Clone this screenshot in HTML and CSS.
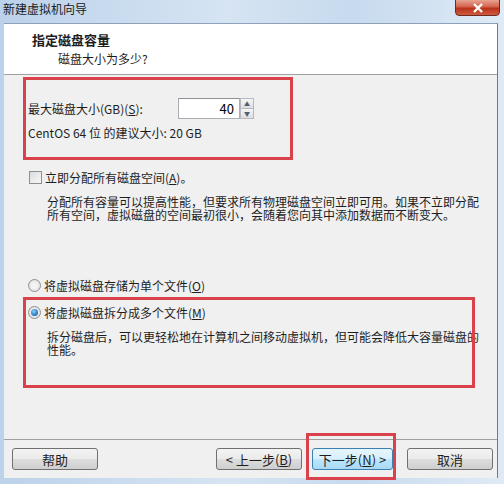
FILE: index.html
```html
<!DOCTYPE html>
<html lang="zh-CN">
<head>
  <meta charset="UTF-8">
  <title>新建虚拟机向导</title>
  <link rel="stylesheet" href="styles.css">
</head>
<body>
  <div class="window">
    <div class="titlebar">
      <span class="title">新建虚拟机向导</span>
      <button class="close-btn">
        <svg width="12" height="10" viewBox="0 0 12 10"><path d="M2 1 L10 9 M10 1 L2 9" stroke="#fff" stroke-width="2.4" fill="none"/></svg>
      </button>
    </div>
    <div class="client">
      <div class="header">
        <h1>指定磁盘容量</h1>
        <p>磁盘大小为多少?</p>
      </div>
      <div class="content">
        <div class="mark size-box">
          <div class="size-row">
            <label>最大磁盘大小(GB)(<u>S</u>):</label>
            <div class="spin">
              <input type="text" value="40">
              <div class="spin-buttons">
                <span class="spin-btn">▲</span>
                <span class="spin-btn">▼</span>
              </div>
            </div>
          </div>
          <p class="hint">CentOS 64 位 的建议大小: 20 GB</p>
        </div>

        <div class="option check-option">
          <span class="checkbox"></span>
          <span>立即分配所有磁盘空间(<u>A</u>)。</span>
        </div>
        <p class="desc">分配所有容量可以提高性能，但要求所有物理磁盘空间立即可用。如果不立即分配所有空间，虚拟磁盘的空间最初很小，会随着您向其中添加数据而不断变大。</p>

        <div class="option radio-single">
          <span class="radio"></span>
          <span>将虚拟磁盘存储为单个文件(<u>O</u>)</span>
        </div>

        <div class="mark split-box">
          <div class="option">
            <span class="radio checked"></span>
            <span>将虚拟磁盘拆分成多个文件(<u>M</u>)</span>
          </div>
          <p class="desc">拆分磁盘后，可以更轻松地在计算机之间移动虚拟机，但可能会降低大容量磁盘的性能。</p>
        </div>
      </div>
      <div class="footer">
        <button class="btn help">帮助</button>
        <div class="spacer"></div>
        <button class="btn">&lt; 上一步(<u>B</u>)</button>
        <div class="mark next-mark">
          <button class="btn primary">下一步(<u>N</u>) &gt;</button>
        </div>
        <button class="btn cancel">取消</button>
      </div>
    </div>
  </div>
</body>
</html>
```

FILE: styles.css
```css
body {
  margin: 0;
  font-family: "Noto Sans CJK SC", "Liberation Sans", sans-serif;
  font-size: 12px;
  color: #1e1e1e;
  background: #c4d7ec;
}

.window {
  width: 504px;
  height: 484px;
  display: flex;
  flex-direction: column;
  background: linear-gradient(90deg, #bcd2ea 0%, #d6e4f3 45%, #c7daee 70%, #dfeaf6 100%);
  overflow: hidden;
}

.titlebar {
  flex-shrink: 0;
  height: 23px;
  position: relative;
}

.title {
  display: block;
  margin: 1px 0 0 3px;
  font-size: 12px;
  line-height: 16px;
  color: #1a1a1a;
}

.close-btn {
  position: absolute;
  right: 4px;
  top: -1px;
  width: 45px;
  height: 17px;
  border: 1px solid #6e2a22;
  border-radius: 0 0 4px 4px;
  background: linear-gradient(#e8a393 0%, #d3634c 45%, #b8321c 55%, #cf5a3c 100%);
  display: flex;
  align-items: center;
  justify-content: center;
  padding: 0;
}

.client {
  flex: 1;
  margin: 0 6px 6px 4px;
  display: flex;
  flex-direction: column;
  background: #f0f0f0;
  border-right: 1px solid #6d7a8a;
  border-top: 1px solid #8da2b9;
}

.header {
  flex-shrink: 0;
  height: 51px;
  background: #fff;
  border-bottom: 1px solid #a0a0a0;
  box-sizing: border-box;
  overflow: hidden;
}

.header h1 {
  margin: 8px 0 0 28px;
  font-size: 13px;
  line-height: 16px;
  font-weight: bold;
}

.header p {
  margin: 3px 0 0 54px;
  line-height: 16px;
}

.content {
  flex-shrink: 0;
  height: 364px;
  padding: 2px 0 0 19px;
  box-sizing: border-box;
}

/* red marker frames drawn over the dialog */
.mark {
  position: relative;
  border: 3px solid transparent;
  box-sizing: border-box;
}

.mark::after {
  content: "";
  position: absolute;
  inset: -3px;
  border: 3px solid #d9414b;
  pointer-events: none;
  z-index: 1;
}

.size-box {
  width: 270px;
  padding: 18px 0 16px 2px;
}

.size-row {
  display: flex;
  align-items: center;
  height: 21px;
}

.size-row label {
  width: 150px;
}

.spin {
  display: flex;
  height: 21px;
}

.spin input {
  width: 62px;
  height: 21px;
  box-sizing: border-box;
  border: 1px solid #abadb3;
  border-top-color: #8e9196;
  text-align: right;
  padding: 0 5px 0 0;
  font: inherit;
  font-size: 13px;
  background: #fff;
}

.spin-buttons {
  display: flex;
  flex-direction: column;
  width: 14px;
}

.spin-btn {
  flex: 1;
  font-size: 6px;
  line-height: 9px;
  text-align: center;
  color: #4d5e74;
  border: 1px solid #b5b9c2;
  background: linear-gradient(#f6f6f6, #dedede);
}

.spin-btn + .spin-btn {
  border-top: none;
}

.hint {
  margin: 6px 0 0;
  line-height: 16px;
}

.option {
  display: flex;
  align-items: center;
  gap: 3px;
  height: 16px;
  padding-left: 6px;
}

.check-option {
  margin-top: 9px;
}

.checkbox {
  width: 11px;
  height: 11px;
  border: 1px solid #8f8f8f;
  background: linear-gradient(135deg, #dcdcdc, #f8f8f8);
}

.desc {
  margin: 10px 0 0 24px;
  width: 440px;
  line-height: 13px;
  word-break: break-all;
}

.radio-single {
  margin-top: 56px;
  padding-left: 5px;
}

.radio {
  width: 11px;
  height: 11px;
  border: 1px solid #8e8f8f;
  border-radius: 50%;
  background: radial-gradient(circle, #f4f4f4 30%, #d6d6d6 100%);
  position: relative;
}

.radio.checked::after {
  content: "";
  position: absolute;
  left: 2px;
  top: 2px;
  width: 7px;
  height: 7px;
  border-radius: 50%;
  background: radial-gradient(circle at 40% 35%, #8ed0f5 0%, #2b7cc4 60%, #1b4f86 100%);
}

.split-box {
  margin-top: 4px;
  width: 452px;
  height: 91px;
  padding-top: 4px;
}

.split-box .option {
  padding-left: 2px;
}

.split-box .desc {
  margin: 10px 0 0 21px;
  width: 434px;
}

.footer {
  flex-shrink: 0;
  height: 38px;
  box-sizing: border-box;
  border-top: 1px solid #a0a0a0;
  display: flex;
  align-items: flex-start;
  padding: 8px 4px 0 8px;
}

.spacer {
  flex: 1;
}

.btn {
  flex-shrink: 0;
  width: 86px;
  height: 22px;
  border: 1px solid #707070;
  border-radius: 3px;
  background: linear-gradient(#f3f3f3 0%, #ebebeb 48%, #dddddd 52%, #cfcfcf 100%);
  font: inherit;
  font-size: 13px;
  color: #1e1e1e;
  padding: 0;
}

.btn.primary {
  background: linear-gradient(#e6f5fd 0%, #d9f0fc 48%, #bee6fd 52%, #a7d9f5 100%);
  border-color: #3c7fb1;
  width: 81px;
}

.next-mark {
  flex-shrink: 0;
  margin: -15px 0 0 4px;
  width: 90px;
  height: 47px;
  padding: 12px 0 0 3px;
}

.cancel {
  margin-left: 11px;
}
```
